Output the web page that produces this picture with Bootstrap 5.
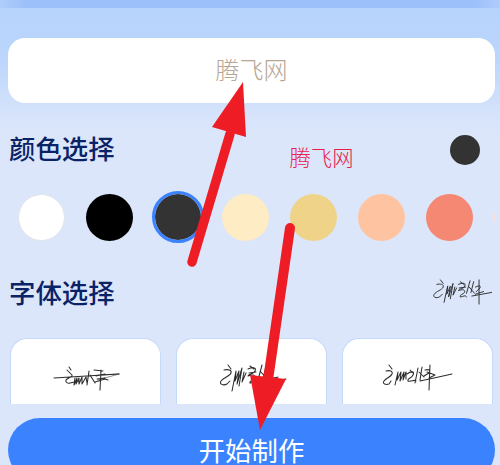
<!DOCTYPE html>
<html lang="zh">
<head>
<meta charset="utf-8">
<link href="https://cdn.jsdelivr.net/npm/bootstrap@5.3.0/dist/css/bootstrap.min.css" rel="stylesheet">
<style>
html,body{width:500px;height:465px;overflow:hidden}
body{font-family:"Noto Sans CJK SC","Liberation Sans",sans-serif;background:#dbe6fa}
.stage{position:relative;width:500px;height:465px;overflow:hidden;background:linear-gradient(180deg,#b6d3fc 8px,#bcd6fc 60px,#d6e3fb 115px,#dbe6fa 135px)}
.topband{height:8px;background:linear-gradient(90deg,#b0cdfb 0,#9cc0fa 25px,#9cc0fa 475px,#b0cdfb 500px)}
.namebox{height:65px;margin:30px 5px 0 8px;padding-bottom:4px;background:#fff;border-radius:17px;color:#b8a694;font-size:24px;font-weight:300}
.headrow{height:40px;margin:25px 8px 0 9px}
.sect-title{font-size:26.4px;font-weight:500;color:#0a2266;line-height:40px;margin:0;white-space:nowrap}
.preview{font-size:21.3px;font-weight:300;color:#e8204f;margin:17px 0 0 175px;line-height:24px;white-space:nowrap}
.dot-now{width:30px;height:30px;border-radius:50%;background:#333;margin:3px 12px 0 auto;align-self:center}
.swatches{margin-top:23px;padding-left:18px;gap:21px;height:52px;overflow:hidden;width:495px}
.swatch{flex:0 0 47px;width:47px;height:47px;border-radius:50%}
.swatch.on{flex-basis:52px;width:52px;height:52px;margin:0 -2.5px;border:3px solid #3b82ff;background-clip:padding-box}
.sw-a{background:#fff;border:1px solid #e2e4ea}
.sw-b{background:#000}.sw-c{background:#333}.sw-d{background:#feecc4}.sw-e{background:#efd389}.sw-f{background:#fec4a2}.sw-g{background:#f58873}.sw-h{background:#fde3dc}
.headrow2{height:40px;margin:29px 8px 0 9px}
.sig-top{width:60px;height:26px}
.fontcards{margin:26px 8px 0 10px;gap:15px}
.fontcard{flex:0 0 151px;height:66px;padding-top:13px;background:#fff;border:1px solid #c5d9fb;border-bottom:0;border-radius:17px 17px 0 0}
.fontcard svg{width:70px;height:32px}
.startbtn{display:block;width:487px;height:64px;margin:14px 0 0 8px;background:#3b82ff;color:#fff;border:0;border-radius:32px;font-size:26.4px;padding:0;line-height:40px;text-align:center}
.startbtn:hover,.startbtn:active{background:#3b82ff;color:#fff}
.arrows{position:absolute;left:0;top:0;pointer-events:none}
.ink{fill:none;stroke:#2b2b2b;stroke-width:1.05;stroke-linecap:round;stroke-linejoin:round}
.ink-soft{fill:none;stroke:#8a8a8a;stroke-width:1;stroke-linecap:round}
</style>
</head>
<body>
<div class="stage">
  <div class="topband"></div>
  <div class="namebox d-flex align-items-center justify-content-center">腾飞网</div>
  <div class="headrow d-flex">
    <h2 class="sect-title">颜色选择</h2>
    <div class="preview">腾飞网</div>
    <div class="dot-now"></div>
  </div>
  <div class="swatches d-flex align-items-center">
    <div class="swatch sw-a"></div><div class="swatch sw-b"></div><div class="swatch sw-c on"></div><div class="swatch sw-d"></div><div class="swatch sw-e"></div><div class="swatch sw-f"></div><div class="swatch sw-g"></div><div class="swatch sw-h"></div>
  </div>
  <div class="headrow2 d-flex align-items-center justify-content-between">
    <h2 class="sect-title">字体选择</h2>
    <svg class="sig-top" viewBox="0 0 66 29"><path class="ink" d="M9 1l3 4M5 6c4-1 8 0 7 3s-8 5-10 8 2 5 6 3l3-3M17 8l-4 18M17 9l-1 8 4-9-2 12 5-15-3 17M25 9l-2 9 4-8M29 6c4-2 9-2 7 2s-6 2-7 5c3-1 7-2 7 1s-6 3-5 6c3 0 6-3 7 0M31 3l4 3M30 10l7-1M42 2l-4 14M41 9l6 7M46 3l-3 12M48 9c4-2 6-2 5 1l-4 4M52 1v27M44 19l22-4M48 17c4-2 7-2 9-3"/></svg>
  </div>
  <div class="fontcards d-flex">
    <div class="fontcard d-flex align-items-center justify-content-center"><svg viewBox="0 0 70 32"><path class="ink-soft" d="M47 13l21-1M47 18l21-6"/><path class="ink" d="M3 16l65-4M18 5l2 3M16 8l5 5c1 2-5 3-6 5s2 4 4 3l9-2M24 16l-1 7 3-7-1 6 3-6v6l3-7v7l4-7 1 6M38 9l-2 14M39 13l5 8M43 8l9 1M45 14l9-2M50 8l-1 20M44 20l10-3 3 1M46 17l8-1"/></svg></div>
    <div class="fontcard d-flex align-items-center justify-content-center"><svg viewBox="0 0 70 32"><path class="ink" d="M11 3l3 4M7 8c4-1 8 0 7 3s-8 5-10 8 2 5 6 3l3-3M19 9l-4 20M19 10l-1 9 4-10-2 13 5-16-3 18M27 10l-2 10 4-9M31 7c4-2 9-2 7 2s-6 2-7 5c3-1 7-2 7 1s-6 3-5 6c3 0 6-3 7 0M33 4l4 3M32 11l7-1M45 3l-4 15M44 10l6 7M49 4l-3 13M51 10c4-2 6-2 5 1l-4 4M55 2v27M47 21l22-4M51 18c4-2 7-2 10-3"/></svg></div>
    <div class="fontcard d-flex align-items-center justify-content-center"><svg viewBox="0 0 70 32"><path class="ink" d="M6 3l3 4M3 9c4-1 7 0 6 3s-6 4-8 7 2 4 5 3l2-3M15 10l-3 13M15 10l-1 8 4-8-1 9 4-9-1 8 3-8v7M24 12c4-3 8-3 6 1s-6 3-5 6c3 1 7-2 8 0M27 8l3 3M35 6l-3 15M36 10l5 5M39 5l-2 13M42 8c4-1 6 0 4 3l-5 3M47 3l-1 25M37 19l14-3 18-4M44 10l8 3-6 3"/></svg></div>
  </div>
  <button type="button" class="btn startbtn">开始制作</button>
  <svg class="arrows" width="500" height="465" viewBox="0 0 500 465">
    <path d="M192 262L230 134" fill="none" stroke="#ee1c25" stroke-width="9.5" stroke-linecap="round"/>
    <path d="M243 82L212 127 246 137Z" fill="#ee1c25"/>
    <path d="M290 228L268 380" fill="none" stroke="#ee1c25" stroke-width="10" stroke-linecap="round"/>
    <path d="M260 430L250 375 286 379Z" fill="#ee1c25"/>
  </svg>
</div>
<script src="https://cdn.jsdelivr.net/npm/bootstrap@5.3.0/dist/js/bootstrap.bundle.min.js"></script>
</body>
</html>
